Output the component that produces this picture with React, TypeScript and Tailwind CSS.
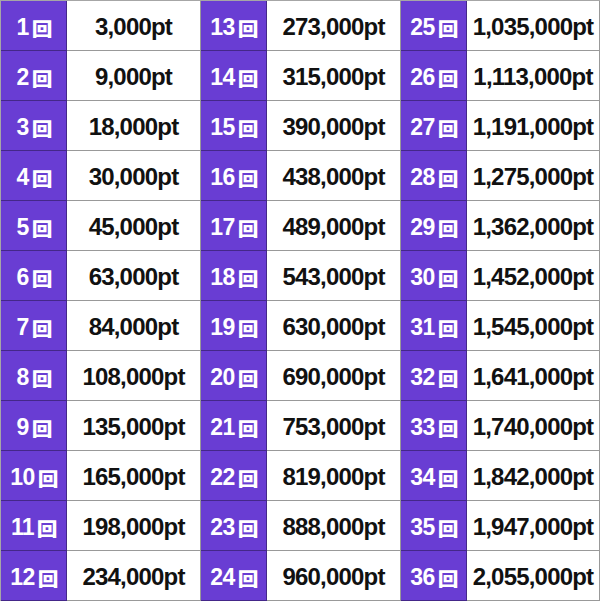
const points = [
  '3,000', '9,000', '18,000', '30,000', '45,000', '63,000',
  '84,000', '108,000', '135,000', '165,000', '198,000', '234,000',
  '273,000', '315,000', '390,000', '438,000', '489,000', '543,000',
  '630,000', '690,000', '753,000', '819,000', '888,000', '960,000',
  '1,035,000', '1,113,000', '1,191,000', '1,275,000', '1,362,000', '1,452,000',
  '1,545,000', '1,641,000', '1,740,000', '1,842,000', '1,947,000', '2,055,000',
];

function Label({ n }: { n: number }) {
  return (
    <div className="flex items-center justify-center bg-[#693dd3] border-r border-b border-black/35 text-white font-bold pt-[3px]">
      <span className="text-[23px] tracking-[-0.6px] leading-none">{n}</span>
      <span className="inline-block text-[18px] leading-none ml-[4px] pt-[2px] font-black font-['Noto_Sans_CJK_JP',sans-serif] scale-x-[1.15]">
        回
      </span>
    </div>
  );
}

function Value({ v }: { v: string }) {
  return (
    <div className="flex items-center justify-center bg-white border-r border-b border-black/40 text-[#111] font-bold text-[24px] tracking-[-0.8px] leading-none pt-[3px]">
      {v}pt
    </div>
  );
}

export default function App() {
  const rows = Array.from({ length: 12 }, (_, i) => i);
  return (
    <div className="w-[600px] h-[610px] bg-white font-['Liberation_Sans','Noto_Sans_CJK_JP',sans-serif]">
      <div className="grid grid-cols-[66px_134px_66px_134px_66px_133px] auto-rows-[50px] border-t border-l border-black/35">
        {rows.map((i) => (
          <>
            <Label key={`a${i}`} n={i + 1} />
            <Value key={`b${i}`} v={points[i]} />
            <Label key={`c${i}`} n={i + 13} />
            <Value key={`d${i}`} v={points[i + 12]} />
            <Label key={`e${i}`} n={i + 25} />
            <Value key={`f${i}`} v={points[i + 24]} />
          </>
        ))}
      </div>
    </div>
  );
}
